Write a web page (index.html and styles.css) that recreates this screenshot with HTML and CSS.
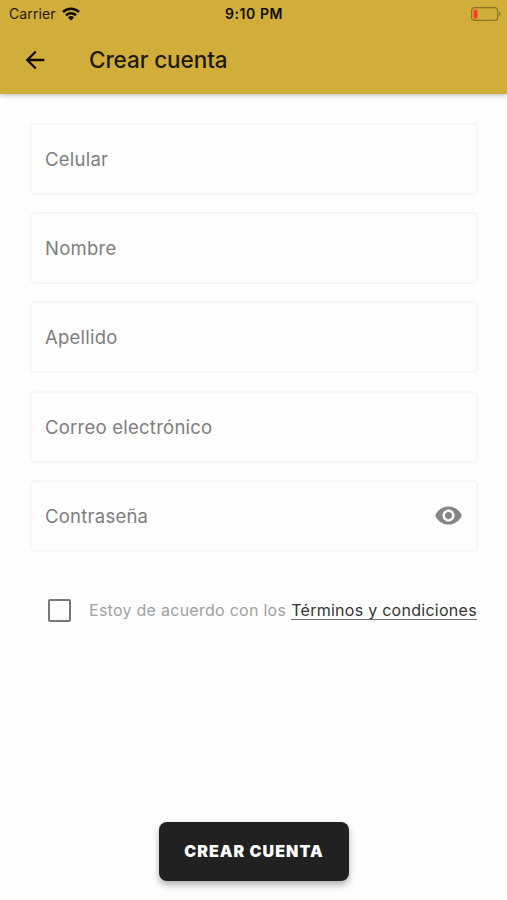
FILE: index.html
```html
<!DOCTYPE html>
<html lang="es">
<head>
  <meta charset="UTF-8" />
  <meta name="viewport" content="width=device-width, initial-scale=1.0" />
  <title>Crear cuenta</title>
  <link rel="stylesheet" href="styles.css">
</head>
<body>

  <header>
    <div class="status-bar">
      <div class="carrier">
        <span>Carrier</span>
        <svg class="wifi" viewBox="0 0 18 14" width="18" height="14">
          <g fill="none" stroke="#0d0b04" stroke-width="2.5">
            <path d="M1 5a11.4 11.4 0 0 1 16 0" />
            <path d="M4 8.3a7.1 7.1 0 0 1 10 0" />
          </g>
          <path d="M9 13.4 6 10.4a4.3 4.3 0 0 1 6 0z" fill="#0d0b04" />
        </svg>
      </div>
      <span class="time">9:10 PM</span>
      <div class="battery-box">
        <svg viewBox="0 0 30 14" width="30" height="14">
          <rect x="0.6" y="0.6" width="26" height="12.8" rx="3" fill="none" stroke="#8b7425" stroke-width="1.2" />
          <rect x="2.6" y="2.7" width="3.9" height="8.7" rx="1" fill="#fb3a2c" />
          <path d="M28.1 4.8c2 .8 2 3.7 0 4.5z" fill="#8b7425" />
        </svg>
      </div>
    </div>
    <div class="app-bar">
      <svg class="back" viewBox="0 0 24 24" width="28" height="28">
        <path d="M20 11H7.83l5.59-5.59L12 4l-8 8 8 8 1.41-1.41L7.83 13H20v-2z" fill="#0d0b04" />
      </svg>
      <h1>Crear cuenta</h1>
    </div>
  </header>

  <main>
    <form class="fields">
      <div class="field"><label>Celular</label></div>
      <div class="field"><label>Nombre</label></div>
      <div class="field"><label>Apellido</label></div>
      <div class="field"><label>Correo electrónico</label></div>
      <div class="field">
        <label>Contraseña</label>
        <svg class="eye" viewBox="0 0 24 24" width="29" height="29">
          <path d="M12 4.5C7 4.5 2.73 7.61 1 12c1.73 4.39 6 7.5 11 7.5s9.27-3.11 11-7.5c-1.73-4.39-6-7.5-11-7.5zM12 17c-2.76 0-5-2.24-5-5s2.24-5 5-5 5 2.24 5 5-2.24 5-5 5zm0-8c-1.66 0-3 1.34-3 3s1.34 3 3 3 3-1.34 3-3-1.34-3-3-3z" fill="#858585" />
        </svg>
      </div>
    </form>

    <div class="terms">
      <span class="checkbox"></span>
      <span class="terms-text">Estoy de acuerdo con los</span>
      <a class="terms-link">Términos y condiciones</a>
    </div>

    <button class="submit">CREAR CUENTA</button>
  </main>

</body>
</html>
```

FILE: styles.css
```css
* {
  box-sizing: border-box;
}

body {
  margin: 0;
  height: 900px;
  display: flex;
  flex-direction: column;
  font-family: Inter, "Liberation Sans", sans-serif;
  background-color: #fefefe;
  overflow: hidden;
}

header {
  height: 94px;
  background-color: #d1ae3a;
  color: #1d1808;
  box-shadow: 0 1px 5px rgba(0, 0, 0, 0.3);
}

.status-bar {
  display: flex;
  align-items: center;
  height: 27px;
  padding: 0 6px 0 9px;
  font-size: 14px;
}

.carrier,
.battery-box {
  flex: 1;
  display: flex;
  align-items: center;
}

.carrier {
  gap: 6px;
  letter-spacing: 0.1px;
}

.battery-box {
  justify-content: flex-end;
}

.time {
  font-weight: 600;
  letter-spacing: 0.55px;
  margin-right: 2px;
  color: #0d0b04;
}

.app-bar {
  display: flex;
  align-items: center;
  height: 66px;
  padding-left: 21px;
}

h1 {
  margin: 0 0 2px 40px;
  font-size: 22.5px;
  font-weight: 500;
  letter-spacing: -0.08px;
  white-space: nowrap;
}

main {
  flex: 1;
  display: flex;
  flex-direction: column;
  padding: 29px 29px 19px 30px;
}

.fields {
  display: flex;
  flex-direction: column;
  gap: 17.2px;
}

.field {
  display: flex;
  align-items: center;
  justify-content: space-between;
  height: 72px;
  padding: 0 13px;
  border: 2px solid #f7f7f7;
  border-radius: 5px;
}

.field label {
  font-size: 18.5px;
  color: #7d7d7d;
  letter-spacing: 0.24px;
}

.terms {
  display: flex;
  align-items: center;
  margin-top: 47px;
  padding-left: 18px;
  font-size: 16px;
  letter-spacing: 0.27px;
  white-space: nowrap;
}

.checkbox {
  width: 23px;
  height: 23px;
  border: 2.5px solid #777;
  border-radius: 2px;
}

.terms-text {
  margin-left: 18px;
  color: #a0a0a0;
}

.terms-link {
  margin-left: 5px;
  color: #333;
  border-bottom: 1.5px solid #777;
  line-height: 18px;
}

.submit {
  align-self: center;
  width: 190px;
  height: 59px;
  margin-top: auto;
  padding: 0 0 2px;
  border: none;
  border-radius: 8px;
  background-color: #212121;
  color: #fff;
  font-family: inherit;
  font-size: 16px;
  font-weight: 900;
  letter-spacing: 1.05px;
  box-shadow: 0 4px 7px rgba(0, 0, 0, 0.3);
}
```
